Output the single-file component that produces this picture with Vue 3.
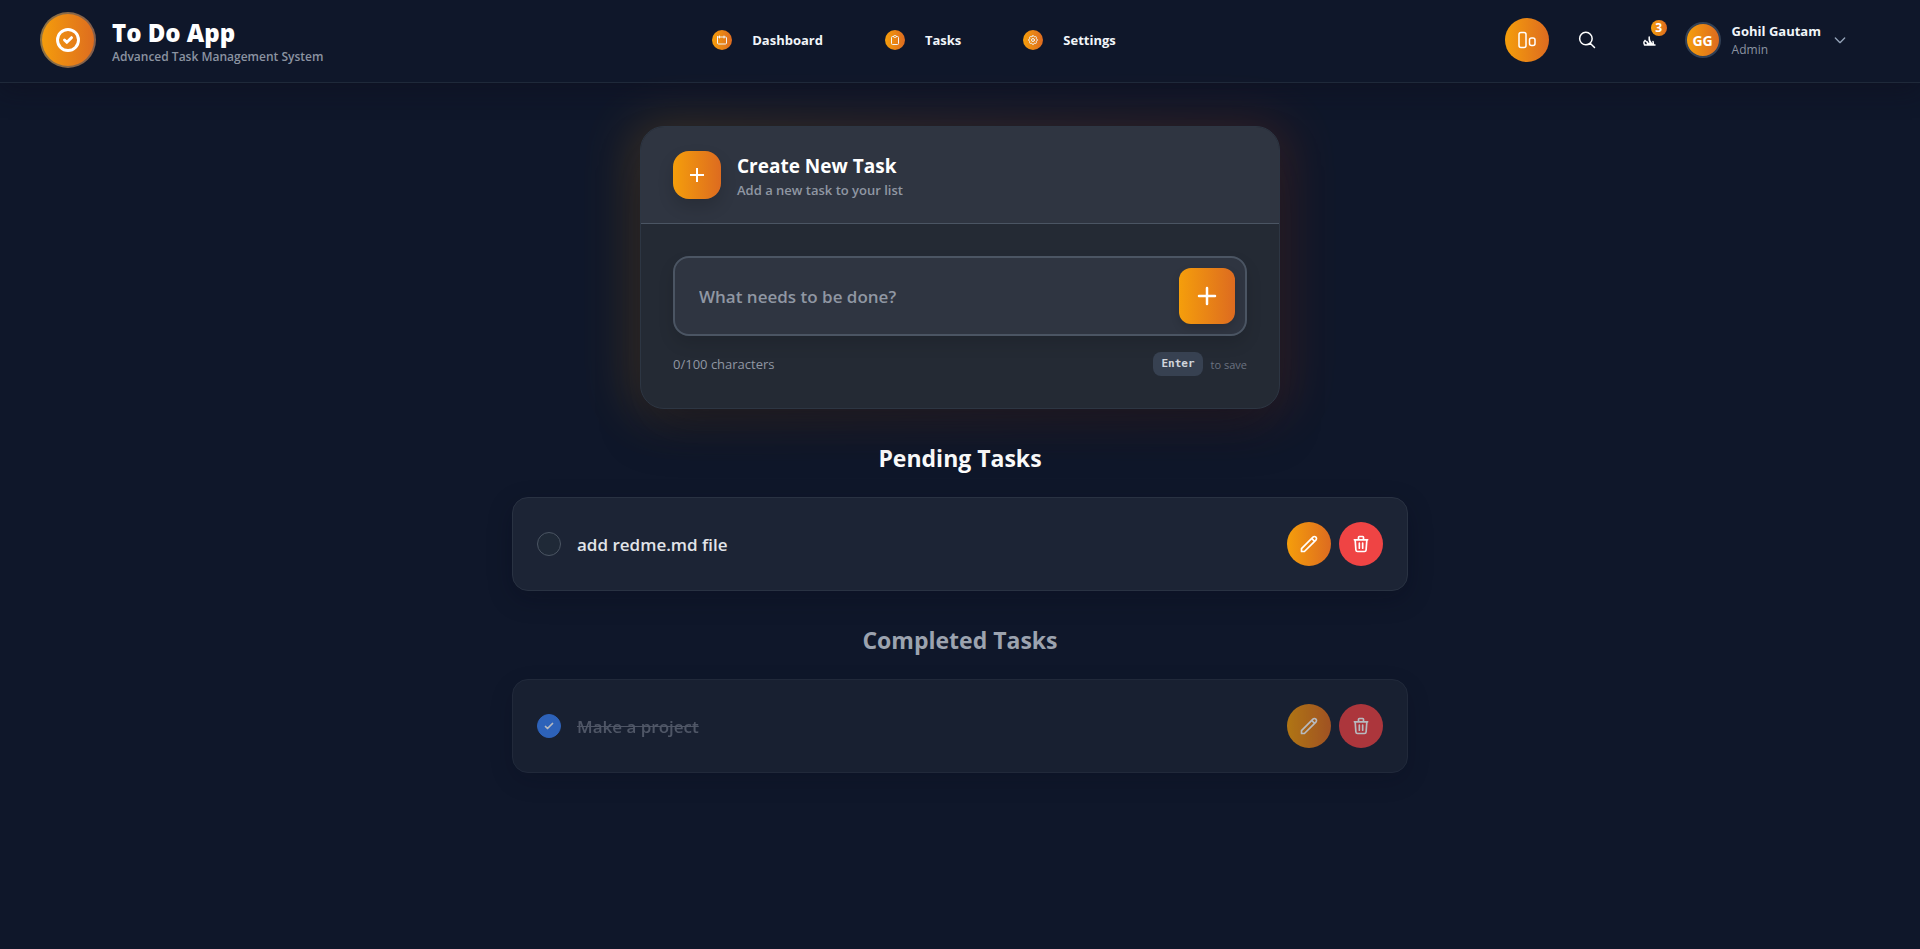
<script setup>
import { ref, computed } from 'vue'

const draft = ref('')
const tasks = ref([
  { id: 1, text: 'add redme.md file', done: false },
  { id: 2, text: 'Make a project', done: true },
])
const groups = computed(() => [
  { key: 'pending', title: 'Pending Tasks', items: tasks.value.filter((t) => !t.done) },
  { key: 'completed', title: 'Completed Tasks', items: tasks.value.filter((t) => t.done) },
])

function addTask() {
  const text = draft.value.trim()
  if (!text) return
  tasks.value.push({ id: Date.now(), text, done: false })
  draft.value = ''
}
function removeTask(id) {
  tasks.value = tasks.value.filter((t) => t.id !== id)
}
</script>

<template>
  <div class="page">
    <header class="topbar">
      <div class="brand">
        <span class="brand-mark">
          <svg width="28" height="28" viewBox="0 0 24 24" stroke-width="2.5"><path d="M9 12l2 2 4-4m6 2a9 9 0 11-18 0 9 9 0 0118 0z" /></svg>
        </span>
        <div class="brand-text">
          <h1 class="brand-title">To Do App</h1>
          <p class="brand-sub">Advanced Task Management System</p>
        </div>
      </div>

      <nav class="nav">
        <a href="#dashboard" class="nav-link">
          <span class="nav-icon">
            <svg width="12" height="12" viewBox="0 0 24 24" stroke-width="2"><path d="M3 5v13a2 2 0 002 2h14a2 2 0 002-2V8a2 2 0 00-2-2H4M7 4v4M16 4v4" /></svg>
          </span>
          <span>Dashboard</span>
        </a>
        <a href="#tasks" class="nav-link">
          <span class="nav-icon">
            <svg width="12" height="12" viewBox="0 0 24 24" stroke-width="2"><path d="M9 5H7a2 2 0 00-2 2v12a2 2 0 002 2h10a2 2 0 002-2V7a2 2 0 00-2-2h-2M9 5a2 2 0 002 2h2a2 2 0 002-2M9 5a2 2 0 012-2h2a2 2 0 012 2" /></svg>
          </span>
          <span>Tasks</span>
        </a>
        <a href="#settings" class="nav-link">
          <span class="nav-icon">
            <svg width="12" height="12" viewBox="0 0 24 24" stroke-width="2"><path d="M10.325 4.317c.426-1.756 2.924-1.756 3.35 0a1.724 1.724 0 002.573 1.066c1.543-.94 3.31.826 2.37 2.37a1.724 1.724 0 001.065 2.572c1.756.426 1.756 2.924 0 3.35a1.724 1.724 0 00-1.066 2.573c.94 1.543-.826 3.31-2.37 2.37a1.724 1.724 0 00-2.572 1.065c-.426 1.756-2.924 1.756-3.35 0a1.724 1.724 0 00-2.573-1.066c-1.543.94-3.31-.826-2.37-2.37a1.724 1.724 0 00-1.065-2.572c-1.756-.426-1.756-2.924 0-3.35a1.724 1.724 0 001.066-2.573c-.94-1.543.826-3.31 2.37-2.37.996.608 2.296.07 2.572-1.065z" /><path d="M15 12a3 3 0 11-6 0 3 3 0 016 0z" /></svg>
          </span>
          <span>Settings</span>
        </a>
      </nav>

      <div class="tools">
        <button type="button" class="round accent" aria-label="Board view">
          <svg width="20" height="20" viewBox="0 0 20 20" stroke-width="1.5"><rect x="2" y="2.5" width="7" height="15" rx="2" /><rect x="12.500" y="8" width="5.500" height="7.500" rx="2" /></svg>
        </button>
        <button type="button" class="round" aria-label="Search">
          <svg width="20" height="20" viewBox="0 0 24 24" stroke-width="1.8"><path d="m21 21-5.200-5.200m0 0A7.500 7.500 0 1 0 5.200 5.200a7.500 7.500 0 0 0 10.600 10.600Z" /></svg>
        </button>
        <button type="button" class="round bell" aria-label="Notifications">
          <svg width="20" height="20" viewBox="0 0 20 20" stroke-width="1.5"><path d="M7.500 15h10.500M8 10.500c-1.500 1-1.500 3.500 0 4.200M8 10.500l5 4.200M10.500 12v2.500M12.200 7v3l3 4.500M12.200 8l1 6M16 11.500l.5 3" /></svg>
          <span class="badge">3</span>
        </button>
        <button type="button" class="profile">
          <span class="avatar">GG</span>
          <span class="who">
            <span class="who-name">Gohil Gautam</span>
            <span class="who-role">Admin</span>
          </span>
          <svg class="chevron" width="16" height="16" viewBox="0 0 24 24" stroke-width="2"><path d="M19 9l-7 7-7-7" /></svg>
        </button>
      </div>
    </header>

    <main class="content">
      <section class="composer">
        <div class="composer-head">
          <span class="composer-icon">
            <svg width="24" height="24" viewBox="0 0 24 24" stroke-width="2"><path class="butt" d="M12 5v14M5 12h14" /></svg>
          </span>
          <div>
            <h2 class="composer-title">Create New Task</h2>
            <p class="composer-sub">Add a new task to your list</p>
          </div>
        </div>
        <form class="composer-body" @submit.prevent="addTask">
          <div class="field">
            <input v-model="draft" type="text" maxlength="100" placeholder="What needs to be done?" aria-label="New task" />
            <button type="submit" class="add" aria-label="Add task">
              <svg width="28" height="28" viewBox="0 0 28 28" stroke-width="2.5"><path d="M14 6v16M6 14h16" /></svg>
            </button>
          </div>
          <div class="hints">
            <span>{{ draft.length }}/100 characters</span>
            <span class="save"><kbd>Enter</kbd>to save</span>
          </div>
        </form>
      </section>

      <section v-for="group in groups" :key="group.key" class="group" :class="group.key">
        <h2 class="group-title">{{ group.title }}</h2>
        <ul class="list">
          <li v-for="task in group.items" :key="task.id" class="task">
            <label class="task-label">
              <span class="tick">
                <input v-model="task.done" type="checkbox" />
                <svg v-if="task.done" width="12" height="12" viewBox="0 0 24 24" stroke-width="3.500"><path d="M5 13l4 4L19 7" /></svg>
              </span>
              <span class="task-text">{{ task.text }}</span>
            </label>
            <button type="button" class="round accent" aria-label="Edit task">
              <svg width="20" height="20" viewBox="0 0 24 24" stroke-width="2"><path d="M15.232 5.232l3.536 3.536m-2.036-5.036a2.500 2.500 0 113.536 3.536L6.500 21.036H3v-3.572L16.732 3.732z" /></svg>
            </button>
            <button type="button" class="round danger" aria-label="Delete task" @click="removeTask(task.id)">
              <svg width="20" height="20" viewBox="0 0 24 24" stroke-width="2"><path d="M19 7l-.867 12.142A2 2 0 0116.138 21H7.862a2 2 0 01-1.995-1.858L5 7m5 4v6m4-6v6m1-10V4a1 1 0 00-1-1h-4a1 1 0 00-1 1v3M4 7h16" /></svg>
            </button>
          </li>
        </ul>
      </section>
    </main>
  </div>
</template>

<style>
body {
  margin: 0;
  background: #0f172a;
}
</style>

<style scoped>
.page {
  --accent: linear-gradient(90deg, #f59e0b, #dd6b20);
  min-height: 100vh;
  color: #fff;
  font-family: "Segoe UI", "Open Sans", "Noto Sans", sans-serif;
  font-size: 14px;
}
.page * {
  box-sizing: border-box;
}
h1, h2, p, ul {
  margin: 0;
  padding: 0;
}
svg {
  display: block;
  flex: none;
  fill: none;
  stroke: currentColor;
  stroke-linecap: round;
  stroke-linejoin: round;
}
.butt {
  stroke-linecap: butt;
}
button {
  padding: 0;
  border: 0;
  background: none;
  color: inherit;
  font: inherit;
  cursor: pointer;
}

.topbar {
  display: flex;
  align-items: center;
  justify-content: space-between;
  padding: 12px 72px 14px 40px;
  border-bottom: 1px solid #1f293a;
  box-shadow: 0 8px 24px rgba(16, 12, 28, 0.4);
}
.brand {
  display: flex;
  align-items: center;
  gap: 16px;
}
.brand-mark {
  display: grid;
  place-items: center;
  width: 56px;
  height: 56px;
  border: 2px solid rgba(71, 85, 105, 0.6);
  border-radius: 50%;
  background: var(--accent) border-box;
}
.brand-text {
  padding-top: 2px;
}
.brand-title {
  font-size: 24px;
  font-weight: 800;
  line-height: 32px;
}
.brand-sub {
  color: #8b93a1;
  font-size: 12px;
  font-weight: 600;
  line-height: 16px;
}
.nav {
  display: flex;
  gap: 62px;
}
.nav-link {
  display: flex;
  align-items: center;
  gap: 20px;
  color: #f1f5f9;
  font-size: 13px;
  font-weight: 700;
  text-decoration: none;
}
.nav-icon {
  display: grid;
  place-items: center;
  width: 20px;
  height: 20px;
  border-radius: 50%;
  background: var(--accent);
}
.tools {
  display: flex;
  align-items: center;
  gap: 16px;
}
.round {
  display: grid;
  place-items: center;
  flex: none;
  width: 44px;
  height: 44px;
  border-radius: 50%;
}
.accent {
  background: var(--accent);
}
.danger {
  background: #ef4444;
}
.bell {
  position: relative;
}
.badge {
  position: absolute;
  top: 2px;
  right: 2px;
  width: 16px;
  height: 16px;
  border-radius: 50%;
  background: var(--accent);
  font-size: 12px;
  font-weight: 700;
  line-height: 16px;
  text-align: center;
}
.profile {
  display: flex;
  align-items: center;
  gap: 11px;
  text-align: left;
}
.avatar {
  display: grid;
  place-items: center;
  width: 36px;
  height: 36px;
  border: 2px solid #334155;
  border-radius: 50%;
  background: var(--accent);
  font-size: 14px;
  font-weight: 700;
}
.who {
  display: flex;
  flex-direction: column;
}
.who-name {
  color: #f1f5f9;
  font-size: 13px;
  font-weight: 700;
  line-height: 20px;
}
.who-role {
  color: #8b93a1;
  font-size: 12px;
  line-height: 18px;
}
.chevron {
  color: #94a3b8;
}

.content {
  display: flex;
  flex-direction: column;
  gap: 32px;
  max-width: 896px;
  margin: 0 auto;
  padding: 43px 0 64px;
}
.composer {
  position: relative;
  width: 100%;
  max-width: 640px;
  margin: 0 auto;
  border: 1px solid #2d3643;
  border-radius: 24px;
  background: #242a34;
  box-shadow: 0 24px 48px -12px rgba(12, 12, 24, 0.5);
}
.composer::before {
  content: "";
  position: absolute;
  inset: -8px -12px;
  z-index: -1;
  border-radius: 32px;
  background: linear-gradient(90deg, #f59e0b, #dd6b20 50%, #c2410c);
  opacity: 0.18;
  filter: blur(24px);
}
.composer-head {
  display: flex;
  align-items: center;
  gap: 16px;
  padding: 24px 32px;
  border-bottom: 1px solid #4b5563;
  border-radius: 23px 23px 0 0;
  background: #2f3541;
}
.composer-icon {
  display: grid;
  place-items: center;
  width: 48px;
  height: 48px;
  border-radius: 16px;
  background: var(--accent);
  box-shadow: 0 8px 16px rgba(0, 0, 0, 0.15);
}
.composer-title {
  font-size: 19px;
  font-weight: 700;
  line-height: 30px;
}
.composer-sub {
  color: #9097a3;
  font-size: 13px;
  font-weight: 600;
  line-height: 18px;
}
.composer-body {
  padding: 32px;
}
.field {
  display: flex;
  align-items: center;
  padding: 10px;
  border: 2px solid #4b5563;
  border-radius: 16px;
  background: #2f3541;
  box-shadow: 0 8px 16px rgba(0, 0, 0, 0.12);
}
.field input {
  flex: 1;
  min-width: 0;
  height: 56px;
  padding: 0 14px;
  border: 0;
  outline: 0;
  background: none;
  color: #fff;
  font-family: inherit;
  font-size: 17px;
  font-weight: 600;
}
.field input::placeholder {
  color: #9097a3;
  opacity: 1;
}
.add {
  display: grid;
  place-items: center;
  width: 56px;
  height: 56px;
  border-radius: 12px;
  background: var(--accent);
  box-shadow: 0 4px 8px rgba(0, 0, 0, 0.15);
}
.hints {
  display: flex;
  align-items: center;
  justify-content: space-between;
  margin-top: 16px;
  color: #9097a3;
  font-size: 13px;
}
.save {
  display: flex;
  align-items: center;
  gap: 8px;
  color: #6b7280;
  font-size: 11px;
}
kbd {
  padding: 0 8px;
  border-radius: 8px;
  background: #374151;
  color: #d1d5db;
  font-family: "DejaVu Sans Mono", monospace;
  font-size: 11px;
  font-weight: 700;
  line-height: 24px;
}

.group-title {
  margin-bottom: 22px;
  font-size: 23px;
  font-weight: 700;
  line-height: 34px;
  text-align: center;
}
.completed .group-title {
  color: #9ca3af;
}
.list {
  display: flex;
  flex-direction: column;
  gap: 16px;
  list-style: none;
}
.task {
  display: flex;
  align-items: center;
  gap: 8px;
  padding: 24px;
  border: 1px solid #293242;
  border-radius: 16px;
  background: #1c2435;
  box-shadow: 0 8px 24px rgba(8, 8, 24, 0.25);
}
.completed .task {
  opacity: 0.7;
}
.task-label {
  display: flex;
  flex: 1;
  align-items: center;
  gap: 16px;
  min-width: 0;
}
.tick {
  display: grid;
  place-items: center;
}
.tick > * {
  grid-area: 1 / 1;
}
.tick input {
  appearance: none;
  width: 24px;
  height: 24px;
  margin: 0;
  border: 1px solid #4b5563;
  border-radius: 50%;
  background: #1f2937;
}
.tick input:checked {
  border-color: #3b82f6;
  background: #3b82f6;
}
.tick svg {
  pointer-events: none;
  z-index: 1;
}
.task-text {
  color: #e2e4e9;
  font-size: 17px;
  font-weight: 600;
}
.completed .task-text {
  color: #6b7280;
  text-decoration: line-through;
}
</style>
